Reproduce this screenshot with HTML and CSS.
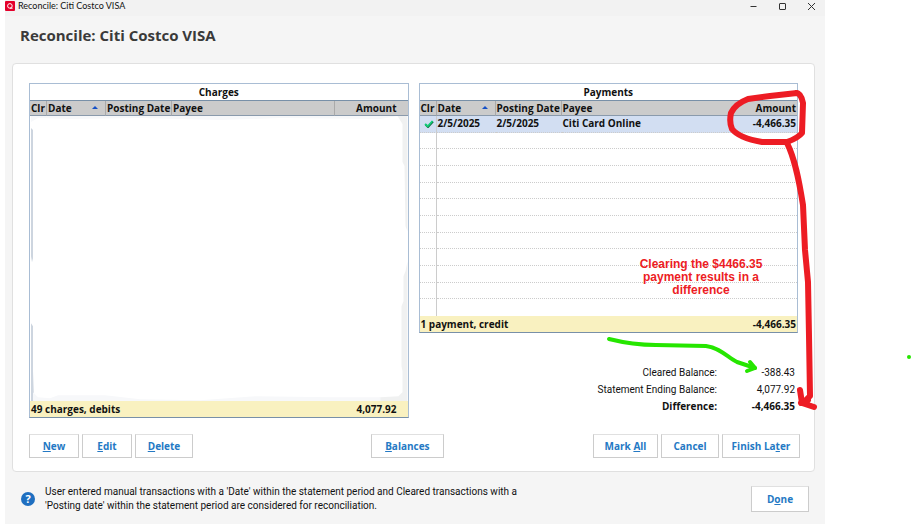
FILE: index.html
```html
<!DOCTYPE html>
<html lang="en">
<head>
    <meta charset="UTF-8">
    <meta name="viewport" content="width=device-width, initial-scale=1.0">
    <title>Reconcile: Citi Costco VISA</title>
    <link rel="stylesheet" href="styles.css">
</head>
<body>
    <div class="window">
        <header class="titlebar">
            <svg class="app-icon" viewBox="0 0 10 10" aria-hidden="true">
                <rect width="10" height="10" rx="1" fill="#e4002b"/>
                <circle cx="4.9" cy="4.9" r="2.3" fill="none" stroke="#fff" stroke-width="1"/>
                <path d="M5 7.2h2.6" stroke="#fff" stroke-width="1"/>
            </svg>
            <span class="titlebar-text">Reconcile: Citi Costco VISA</span>
            <div class="window-controls">
                <button class="control" aria-label="Minimize"><svg viewBox="0 0 9 9"><path d="M1.500 4.500h6"/></svg></button>
                <button class="control" aria-label="Maximize"><svg viewBox="0 0 9 9"><rect x="1.500" y="1.500" width="6" height="6" rx="0.500"/></svg></button>
                <button class="control" aria-label="Close"><svg viewBox="0 0 9 9"><path d="M1 1l7 7M8 1l-7 7"/></svg></button>
            </div>
        </header>

        <h1>Reconcile: Citi Costco VISA</h1>

        <main class="panel">
            <div class="columns">
                <section class="list charges">
                    <h2>Charges</h2>
                    <table>
                        <thead>
                            <tr>
                                <th class="clr">Clr</th>
                                <th class="date">Date <span class="sort"></span></th>
                                <th class="posting">Posting Date</th>
                                <th>Payee</th>
                                <th class="amount">Amount</th>
                            </tr>
                        </thead>
                    </table>
                    <svg class="cleared-area" viewBox="0 0 377 285" preserveAspectRatio="none" aria-hidden="true">
                        <path fill="#cdd5df" d="M1 12L3 14V142L2 146L1 140ZM1 207L3 210V255L4 285H1Z"/>
                        <path fill="#f0f1f1" d="M367 0H377V115L375 110L374 50L372 46V8ZM377 145V285H340L350 281L368 280L372 276V255L371 250V190L373 185L373 160L375 155Z"/>
                        <path fill="#f7f8fa" d="M1 0H367L350 3L250 2L190 4L110 2L40 3L8 2L1 6ZM3 276L8 281L20 282L28 279L75 279L110 283L170 284L225 280L300 281L350 281V285H3Z"/>
                    </svg>
                    <div class="total"><span>49 charges, debits</span><span>4,077.92</span></div>
                </section>

                <div class="right">
                    <section class="list payments">
                        <h2>Payments</h2>
                        <table>
                            <thead>
                                <tr>
                                    <th class="clr">Clr</th>
                                    <th class="date">Date <span class="sort"></span></th>
                                    <th class="posting">Posting Date</th>
                                    <th class="payee">Payee</th>
                                    <th class="amount">Amount</th>
                                </tr>
                            </thead>
                            <tbody>
                                <tr class="selected">
                                    <td><svg class="check" viewBox="0 0 10 8" role="img" aria-label="Cleared"><path d="M1.500 4.500L4 7L9 1.500" fill="none" stroke="#176b45" stroke-width="2"/><path d="M1 4L3.700 6.300L8.500 1" fill="none" stroke="#12cf78" stroke-width="1.800"/></svg></td>
                                    <td>2/5/2025</td>
                                    <td>2/5/2025</td>
                                    <td>Citi Card Online</td>
                                    <td class="amount">-4,466.35</td>
                                </tr>
                                <tr><td></td><td colspan="4"></td></tr>
                                <tr><td></td><td colspan="4"></td></tr>
                                <tr><td></td><td colspan="4"></td></tr>
                                <tr><td></td><td colspan="4"></td></tr>
                                <tr><td></td><td colspan="4"></td></tr>
                                <tr><td></td><td colspan="4"></td></tr>
                                <tr><td></td><td colspan="4"></td></tr>
                                <tr><td></td><td colspan="4"></td></tr>
                                <tr><td></td><td colspan="4"></td></tr>
                                <tr><td></td><td colspan="4"></td></tr>
                                <tr><td></td><td colspan="4"></td></tr>
                            </tbody>
                        </table>
                        <div class="total"><span>1 payment, credit</span><span>-4,466.35</span></div>
                    </section>

                    <dl class="balances">
                        <dt>Cleared Balance:</dt><dd>-388.43</dd>
                        <dt>Statement Ending Balance:</dt><dd>4,077.92</dd>
                        <dt class="difference">Difference:</dt><dd class="difference">-4,466.35</dd>
                    </dl>
                </div>
            </div>

            <div class="actions">
                <div class="group">
                    <button class="btn small"><u>N</u>ew</button>
                    <button class="btn small"><u>E</u>dit</button>
                    <button class="btn"><u>D</u>elete</button>
                </div>
                <button class="btn wide"><u>B</u>alances</button>
                <div class="group end">
                    <button class="btn medium">Mark <u>A</u>ll</button>
                    <button class="btn">Cancel</button>
                    <button class="btn large">Finish La<u>t</u>er</button>
                </div>
            </div>
        </main>

        <footer class="footer">
            <button class="help" aria-label="Help">?</button>
            <p>User entered manual transactions with a 'Date' within the statement period and Cleared transactions with a<br>'Posting date' within the statement period are considered for reconciliation.</p>
            <button class="btn done">D<u>o</u>ne</button>
        </footer>
    </div>

    <!-- Notes drawn over the window -->
    <div class="note">Clearing the $4466.35 payment results in a difference</div>
    <svg class="markup" viewBox="0 0 912 524" aria-hidden="true">
        <g fill="none" stroke="#ed1c24" stroke-width="6" stroke-linecap="round" stroke-linejoin="round">
            <path d="M797 93L770 96L748 99Q735 104 731 113Q729 122 732 129Q739 138 762 142L787 142Q798 138 802 133L803 103Q801 93 796 93"/>
            <path d="M787 143C795 159 799 180 803 205L805 250L808 282L809 336L810 396L804 402"/>
            <path d="M800 390L802 403L814 407M801 403L808 400"/>
        </g>
        <g fill="none" stroke="#26e600" stroke-width="4" stroke-linecap="round" stroke-linejoin="round">
            <path d="M609 339C625 343 638 345 656 345L706 346C721 348 728 358 737 362L755 368"/>
            <path d="M750 362L755 368L747 371"/>
        </g>
        <circle cx="909" cy="357" r="2" fill="#26e600"/>
    </svg>
</body>
</html>
```
FILE: styles.css
```css
* {
    box-sizing: border-box;
}
body {
    margin: 0;
    background: #fff;
    color: #111;
    font-family: "Open Sans", "Noto Sans", sans-serif;
    font-size: 10px;
}
.window {
    margin: 0 87px 0 5px;
    padding-bottom: 12px;
    background: #f5f5f5;
}
.titlebar {
    display: flex;
    align-items: center;
    height: 16px;
    padding-bottom: 4px;
    background: #f2f2f2;
    font-family: Lato, sans-serif;
    font-size: 9px;
    line-height: 12px;
}
.app-icon {
    width: 10px;
    height: 10px;
    margin-right: 3px;
}
.window-controls {
    display: flex;
    gap: 20px;
    margin-left: auto;
    padding-right: 9px;
}
.control {
    display: flex;
    width: 9px;
    padding: 0;
    border: none;
    background: none;
}
.control svg {
    width: 9px;
    height: 9px;
    fill: none;
    stroke: #333;
}
h1 {
    margin: 0;
    padding: 9px 15px 18px;
    color: #3a3a3a;
    font-size: 15px;
    line-height: 20px;
}
.panel {
    margin: 0 10px 0 7px;
    padding: 19px 14px 13px 16px;
    background: #fff;
    border: 1px solid #e0e0e0;
    border-radius: 4px;
}
.columns {
    display: grid;
    grid-template-columns: 1fr 1fr;
    gap: 10px;
    padding-right: 2px;
}
.list {
    border: 1px solid #a9bdd4;
    border-bottom-color: #7890a8;
    font-weight: bold;
}
.charges {
    display: flex;
    flex-direction: column;
}
h2 {
    margin: 0;
    border-bottom: 1px solid #7890a8;
    font-size: 10px;
    line-height: 16px;
    text-align: center;
}
table {
    width: 100%;
    border-collapse: separate;
    border-spacing: 0;
    table-layout: fixed;
}
th {
    height: 15px;
    padding: 0 1px;
    background: #cbcbcb;
    border-right: 1px solid #aaa;
    border-bottom: 1px solid #8a9aac;
    line-height: 14px;
    text-align: left;
    white-space: nowrap;
}
th:last-child {
    border-right: none;
}
.clr {
    width: 17px;
}
.date {
    width: 59px;
}
.posting {
    width: 66px;
}
.sort {
    float: right;
    margin: 5px 6px 0 0;
    border: 3px solid transparent;
    border-top: none;
    border-bottom-color: #1450c8;
}
.amount {
    width: 73px;
    text-align: right;
}
.charges .amount {
    padding-right: 11px;
}
.payments .payee {
    border-right: none;
}
.payments tbody {
    height: 200px;
}
td {
    height: 16px;
    padding: 0 1px;
    border-bottom: 1px dotted #ccc;
    line-height: 15px;
}
td:first-child {
    border-right: 1px solid #ccc;
    text-align: center;
}
tr:last-child td {
    border-bottom: none;
}
.selected {
    background: #d2def2;
}
.check {
    display: block;
    width: 10px;
    height: 8px;
    margin-left: 3px;
}
.cleared-area {
    display: block;
    flex: 1;
    width: 100%;
    min-height: 0;
    background: #fff;
}
.total {
    display: flex;
    justify-content: space-between;
    padding: 0 1px;
    background: #f9f1c0;
    line-height: 16px;
}
.charges .total {
    padding-right: 11px;
}
.balances {
    display: grid;
    grid-template-columns: 1fr 78px;
    margin: 31px 0 1px;
    padding-right: 3px;
    line-height: 17px;
    text-align: right;
}
.balances dt,
.balances dd {
    margin: 0;
    font-family: Roboto, sans-serif;
}
.balances .difference {
    font-family: "Open Sans", "Noto Sans", sans-serif;
    font-weight: bold;
}
.actions {
    display: grid;
    grid-template-columns: 24fr auto 25fr;
    margin-top: 16px;
}
.group {
    display: flex;
    gap: 3px;
}
.end {
    justify-content: flex-end;
}
.btn {
    width: 58px;
    height: 24px;
    padding: 0;
    background: #fff;
    border: 1px solid #ccc;
    border-top-color: #e0e0e0;
    color: #2479c4;
    font: bold 10px "Open Sans", "Noto Sans", sans-serif;
}
.small {
    width: 50px;
}
.medium {
    width: 65px;
}
.wide {
    width: 73px;
}
.large {
    width: 78px;
}
.footer {
    display: flex;
    align-items: center;
    padding: 13px 16px 0;
}
.help {
    width: 14px;
    height: 14px;
    margin-right: 10px;
    padding: 0;
    border: none;
    border-radius: 50%;
    background: #1f6fc0;
    color: #fff;
    font: bold 11px "Open Sans", sans-serif;
    line-height: 14px;
}
.footer p {
    margin: 0;
    font-family: Roboto, sans-serif;
    line-height: 14px;
}
.done {
    height: 26px;
    margin-left: auto;
}
.note {
    position: absolute;
    top: 258px;
    left: 636px;
    width: 130px;
    color: #ed1c24;
    font: bold 12px "Liberation Sans", Arial, sans-serif;
    line-height: 13px;
    text-align: center;
}
.markup {
    position: absolute;
    top: 0;
    left: 0;
    width: 912px;
    height: 524px;
    pointer-events: none;
}
```
